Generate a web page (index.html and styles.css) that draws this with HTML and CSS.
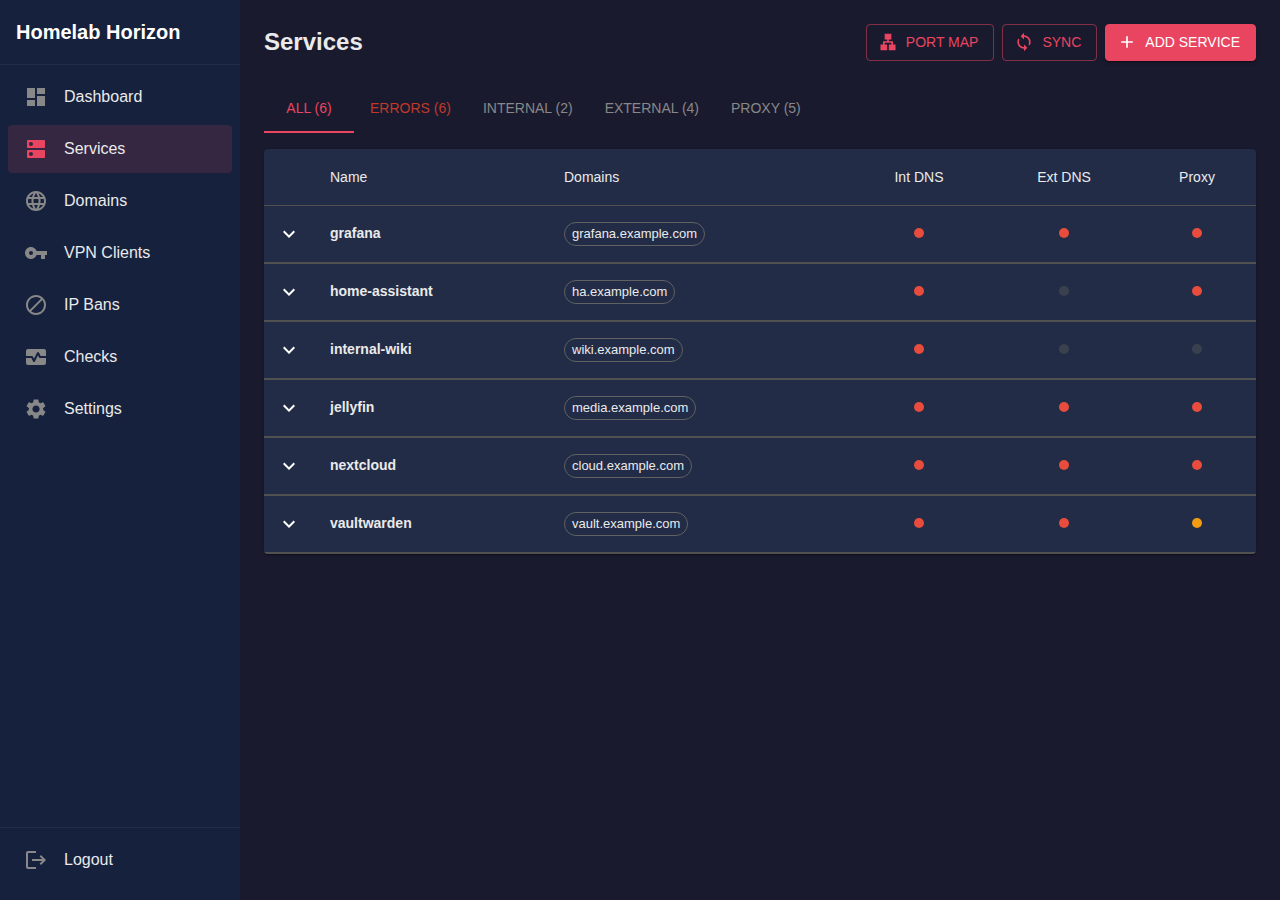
FILE: index.html
```html
<!DOCTYPE html>
<html lang="en">
<head>
<meta charset="utf-8">
<title>Homelab Horizon</title>
<link rel="stylesheet" href="styles.css">
</head>
<body>
<div class="app">
  <aside class="sidebar">
    <div class="brand">Homelab Horizon</div>
    <nav class="nav">
      <a class="nav-item"><svg class="icon" viewBox="0 0 24 24"><path d="M3 13h8V3H3zm0 8h8v-6H3zm10 0h8V11h-8zm0-18v6h8V3z"/></svg><span>Dashboard</span></a>
      <a class="nav-item active"><svg class="icon" viewBox="0 0 24 24"><path d="M20 13H4c-.55 0-1 .45-1 1v6c0 .55.45 1 1 1h16c.55 0 1-.45 1-1v-6c0-.55-.45-1-1-1M7 19c-1.1 0-2-.9-2-2s.9-2 2-2 2 .9 2 2-.9 2-2 2M20 3H4c-.55 0-1 .45-1 1v6c0 .55.45 1 1 1h16c.55 0 1-.45 1-1V4c0-.55-.45-1-1-1M7 9c-1.1 0-2-.9-2-2s.9-2 2-2 2 .9 2 2-.9 2-2 2"/></svg><span>Services</span></a>
      <a class="nav-item"><svg class="icon" viewBox="0 0 24 24"><path d="M11.99 2C6.47 2 2 6.48 2 12s4.47 10 9.99 10C17.52 22 22 17.52 22 12S17.52 2 11.99 2zm6.93 6h-2.95c-.32-1.25-.78-2.45-1.38-3.56 1.84.63 3.37 1.91 4.33 3.56zM12 4.04c.83 1.2 1.48 2.53 1.91 3.96h-3.82c.43-1.43 1.08-2.76 1.91-3.96zM4.26 14C4.1 13.36 4 12.69 4 12s.1-1.36.26-2h3.38c-.08.66-.14 1.32-.14 2s.06 1.34.14 2H4.26zm.82 2h2.95c.32 1.25.78 2.45 1.38 3.56-1.84-.63-3.37-1.9-4.33-3.56zm2.95-8H5.08c.96-1.66 2.49-2.93 4.33-3.56C8.81 5.55 8.35 6.75 8.03 8zM12 19.96c-.83-1.2-1.48-2.53-1.91-3.96h3.82c-.43 1.43-1.08 2.76-1.91 3.96zM14.34 14H9.66c-.09-.66-.16-1.32-.16-2s.07-1.35.16-2h4.68c.09.65.16 1.32.16 2s-.07 1.34-.16 2zm.25 5.56c.6-1.11 1.06-2.31 1.38-3.56h2.95c-.96 1.65-2.49 2.93-4.33 3.56zM16.36 14c.08-.66.14-1.32.14-2s-.06-1.34-.14-2h3.38c.16.64.26 1.31.26 2s-.1 1.36-.26 2h-3.38z"/></svg><span>Domains</span></a>
      <a class="nav-item"><svg class="icon" viewBox="0 0 24 24"><path d="M12.65 10C11.83 7.67 9.61 6 7 6c-3.31 0-6 2.69-6 6s2.69 6 6 6c2.61 0 4.83-1.67 5.65-4H17v4h4v-4h2v-4zM7 14c-1.1 0-2-.9-2-2s.9-2 2-2 2 .9 2 2-.9 2-2 2"/></svg><span>VPN Clients</span></a>
      <a class="nav-item"><svg class="icon" viewBox="0 0 24 24"><path d="M12 2C6.48 2 2 6.48 2 12s4.48 10 10 10 10-4.48 10-10S17.52 2 12 2zM4 12c0-4.42 3.58-8 8-8 1.85 0 3.55.63 4.9 1.69L5.69 16.9C4.63 15.55 4 13.85 4 12zm8 8c-1.85 0-3.55-.63-4.9-1.69L18.31 7.1C19.37 8.45 20 10.15 20 12c0 4.42-3.58 8-8 8z"/></svg><span>IP Bans</span></a>
      <a class="nav-item"><svg class="icon" viewBox="0 0 24 24"><path d="M15.11 12.45 14 10.24l-3.11 6.21c-.16.34-.51.55-.89.55s-.73-.21-.89-.55L7.38 13H2v5c0 1.1.9 2 2 2h16c1.1 0 2-.9 2-2v-5h-6c-.38 0-.73-.21-.89-.55z"/><path d="M20 4H4c-1.1 0-2 .9-2 2v5h6c.38 0 .73.21.89.55L10 13.76l3.11-6.21c.34-.68 1.45-.68 1.79 0L16.62 11H22V6c0-1.1-.9-2-2-2z"/></svg><span>Checks</span></a>
      <a class="nav-item"><svg class="icon" viewBox="0 0 24 24"><path d="M19.14 12.94c.04-.3.06-.61.06-.94 0-.32-.02-.64-.07-.94l2.03-1.58c.18-.14.23-.41.12-.61l-1.92-3.32c-.12-.22-.37-.29-.59-.22l-2.39.96c-.5-.38-1.03-.7-1.62-.94l-.36-2.54c-.04-.24-.24-.41-.48-.41h-3.84c-.24 0-.43.17-.47.41l-.36 2.54c-.59.24-1.13.57-1.62.94l-2.39-.96c-.22-.08-.47 0-.59.22L2.74 8.87c-.12.21-.08.47.12.61l2.03 1.58c-.05.3-.09.63-.09.94s.02.64.07.94l-2.03 1.58c-.18.14-.23.41-.12.61l1.92 3.32c.12.22.37.29.59.22l2.39-.96c.5.38 1.03.7 1.62.94l.36 2.54c.05.24.24.41.48.41h3.84c.24 0 .44-.17.47-.41l.36-2.54c.59-.24 1.13-.56 1.62-.94l2.39.96c.22.08.47 0 .59-.22l1.92-3.32c.12-.22.07-.47-.12-.61zM12 15.6c-1.98 0-3.6-1.62-3.6-3.6s1.62-3.6 3.6-3.6 3.6 1.62 3.6 3.6-1.62 3.6-3.6 3.6"/></svg><span>Settings</span></a>
    </nav>
    <div class="sidebar-footer">
      <a class="nav-item"><svg class="icon" viewBox="0 0 24 24"><path d="m17 7-1.41 1.41L18.17 11H8v2h10.17l-2.58 2.58L17 17l5-5zM4 5h8V3H4c-1.1 0-2 .9-2 2v14c0 1.1.9 2 2 2h8v-2H4z"/></svg><span>Logout</span></a>
    </div>
  </aside>

  <main class="main">
    <header class="page-header">
      <h1 class="page-title">Services</h1>
      <div class="actions">
        <button class="btn btn-outlined"><svg class="btn-icon" viewBox="0 0 24 24"><path d="M13 22h8v-7h-3v-4h-5V9h3V2H8v7h3v2H6v4H3v7h8v-7H8v-2h8v2h-3z"/></svg>Port Map</button>
        <button class="btn btn-outlined"><svg class="btn-icon" viewBox="0 0 24 24"><path d="M12 4V1L8 5l4 4V6c3.31 0 6 2.69 6 6 0 1.01-.25 1.97-.7 2.8l1.46 1.46C19.54 15.03 20 13.57 20 12c0-4.42-3.58-8-8-8m0 14c-3.31 0-6-2.69-6-6 0-1.01.25-1.97.7-2.8L5.24 7.74C4.46 8.97 4 10.43 4 12c0 4.42 3.58 8 8 8v3l4-4-4-4z"/></svg>Sync</button>
        <button class="btn btn-contained"><svg class="btn-icon" viewBox="0 0 24 24"><path d="M19 13h-6v6h-2v-6H5v-2h6V5h2v6h6z"/></svg>Add Service</button>
      </div>
    </header>

    <div class="tabs">
      <button class="tab selected">All (6)</button>
      <button class="tab error">Errors (6)</button>
      <button class="tab">Internal (2)</button>
      <button class="tab">External (4)</button>
      <button class="tab">Proxy (5)</button>
    </div>

    <div class="table-card">
      <table class="services">
        <colgroup><col class="col-toggle"><col class="col-name"><col class="col-domains"><col class="col-int"><col class="col-ext"><col class="col-proxy"></colgroup>
        <thead>
          <tr><th></th><th>Name</th><th>Domains</th><th class="center">Int DNS</th><th class="center">Ext DNS</th><th class="center">Proxy</th></tr>
        </thead>
        <tbody>
          <tr><td class="toggle"><svg class="chevron" viewBox="0 0 24 24"><path d="M7.41 8.59 12 13.17l4.59-4.58L18 10l-6 6-6-6z"/></svg></td><td class="name">grafana</td><td><span class="chip">grafana.example.com</span></td><td><i class="dot down"></i></td><td><i class="dot down"></i></td><td><i class="dot down"></i></td></tr>
          <tr><td class="toggle"><svg class="chevron" viewBox="0 0 24 24"><path d="M7.41 8.59 12 13.17l4.59-4.58L18 10l-6 6-6-6z"/></svg></td><td class="name">home-assistant</td><td><span class="chip">ha.example.com</span></td><td><i class="dot down"></i></td><td><i class="dot off"></i></td><td><i class="dot down"></i></td></tr>
          <tr><td class="toggle"><svg class="chevron" viewBox="0 0 24 24"><path d="M7.41 8.59 12 13.17l4.59-4.58L18 10l-6 6-6-6z"/></svg></td><td class="name">internal-wiki</td><td><span class="chip">wiki.example.com</span></td><td><i class="dot down"></i></td><td><i class="dot off"></i></td><td><i class="dot off"></i></td></tr>
          <tr><td class="toggle"><svg class="chevron" viewBox="0 0 24 24"><path d="M7.41 8.59 12 13.17l4.59-4.58L18 10l-6 6-6-6z"/></svg></td><td class="name">jellyfin</td><td><span class="chip">media.example.com</span></td><td><i class="dot down"></i></td><td><i class="dot down"></i></td><td><i class="dot down"></i></td></tr>
          <tr><td class="toggle"><svg class="chevron" viewBox="0 0 24 24"><path d="M7.41 8.59 12 13.17l4.59-4.58L18 10l-6 6-6-6z"/></svg></td><td class="name">nextcloud</td><td><span class="chip">cloud.example.com</span></td><td><i class="dot down"></i></td><td><i class="dot down"></i></td><td><i class="dot down"></i></td></tr>
          <tr><td class="toggle"><svg class="chevron" viewBox="0 0 24 24"><path d="M7.41 8.59 12 13.17l4.59-4.58L18 10l-6 6-6-6z"/></svg></td><td class="name">vaultwarden</td><td><span class="chip">vault.example.com</span></td><td><i class="dot down"></i></td><td><i class="dot down"></i></td><td><i class="dot warn"></i></td></tr>
        </tbody>
      </table>
    </div>
  </main>
</div>
</body>
</html>
```
FILE: styles.css
```css
*, *::before, *::after { box-sizing: border-box; }

body {
  margin: 0;
  background: #1a1a2e;
  color: #eaeaea;
  font-family: "Liberation Sans", Arial, sans-serif;
  font-size: 16px;
  line-height: 1.5;
}

button { font-family: inherit; cursor: pointer; }
svg { fill: currentColor; flex-shrink: 0; }

.app { display: flex; height: 100vh; }

/* Sidebar */
.sidebar {
  width: 240px;
  display: flex;
  flex-direction: column;
  background: #16213e;
}
.brand {
  height: 65px;
  padding: 16px;
  border-bottom: 1px solid #222c48;
  color: #fff;
  font-size: 20px;
  font-weight: 700;
  line-height: 32px;
}
.nav {
  flex: 1;
  display: flex;
  flex-direction: column;
  gap: 4px;
  padding: 8px;
}
.nav-item {
  display: flex;
  align-items: center;
  gap: 16px;
  height: 48px;
  padding: 0 16px;
  border-radius: 4px;
}
.icon { width: 24px; height: 24px; color: #888; }
.nav-item.active { background: rgba(233, 69, 96, 0.15); }
.nav-item.active .icon { color: #e94560; }
.sidebar-footer {
  padding: 8px 8px 16px;
  border-top: 1px solid #222c48;
}

/* Page */
.main { flex: 1; padding: 24px; }
.page-header {
  display: flex;
  justify-content: space-between;
  align-items: center;
  margin-bottom: 24px;
}
.page-title {
  margin: 0;
  font-size: 24px;
  font-weight: 700;
  line-height: 32px;
}
.actions { display: flex; gap: 8px; }
.btn {
  display: inline-flex;
  align-items: center;
  gap: 8px;
  padding: 5px 15px 5px 11px;
  border: 1px solid rgba(233, 69, 96, 0.5);
  border-radius: 4px;
  background: transparent;
  color: #e94560;
  font-size: 14px;
  line-height: 24.5px;
  text-transform: uppercase;
}
.btn-icon { width: 20px; height: 20px; }
.btn-contained {
  border-color: #e94560;
  background: #e94560;
  color: #fff;
  box-shadow: 0 3px 1px -2px rgba(0, 0, 0, 0.2), 0 2px 2px rgba(0, 0, 0, 0.14), 0 1px 5px rgba(0, 0, 0, 0.12);
}

/* Tabs */
.tabs { display: flex; height: 48px; margin-bottom: 16px; }
.tab {
  min-width: 90px;
  padding: 12px 16px 10px;
  border: 0;
  border-bottom: 2px solid transparent;
  background: none;
  color: #888;
  font-size: 14px;
  line-height: 17.5px;
  text-transform: uppercase;
}
.tab.selected { color: #e94560; border-bottom-color: #e94560; }
.tab.error { color: #c0392b; }

/* Services table */
.table-card {
  overflow: hidden;
  border-radius: 4px;
  background: #222c47;
  box-shadow: 0 2px 1px -1px rgba(0, 0, 0, 0.2), 0 1px 1px rgba(0, 0, 0, 0.14), 0 1px 3px rgba(0, 0, 0, 0.12);
}
.services {
  width: 100%;
  table-layout: fixed;
  border-collapse: separate;
  border-spacing: 0;
  font-size: 14px;
  line-height: 24px;
}
.col-toggle { width: 50px; }
.col-name { width: 234px; }
.col-domains { width: 300px; }
.col-int { width: 142px; }
.col-ext { width: 148px; }
.col-proxy { width: 118px; }
.services th {
  height: 57px;
  padding: 0 16px;
  border-bottom: 1px solid #515151;
  font-weight: 400;
  text-align: left;
}
.services th.center { text-align: center; }
.services td {
  height: 58px;
  padding: 0 16px;
  border-bottom: 2px solid #515151;
}
.services td.name { padding-bottom: 2px; font-weight: 700; }
.services td.toggle { padding: 0 13px; color: #fff; }
.chevron { display: block; width: 24px; height: 24px; }
.chip {
  display: flex;
  align-items: center;
  width: fit-content;
  height: 24px;
  padding: 0 7px;
  border: 1px solid #616161;
  border-radius: 12px;
  font-size: 13px;
}
.dot {
  display: block;
  width: 10px;
  height: 10px;
  margin: 0 auto 2px;
  border-radius: 50%;
}
.dot.down { background: #e74c3c; }
.dot.warn { background: #f39c12; }
.dot.off { background: #3b404e; }
```
